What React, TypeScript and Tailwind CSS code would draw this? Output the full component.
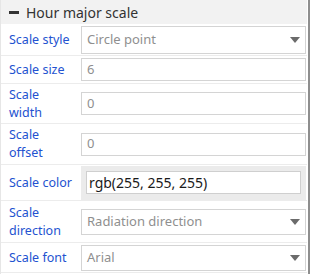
import { ReactNode } from "react";

const font = { fontFamily: '"Noto Sans", "Open Sans", sans-serif' };

function Caret() {
  return (
    <svg width="10" height="6" viewBox="0 0 10 6" className="shrink-0">
      <path d="M0 0 H10 L5 6 Z" fill="#6b6b6b" />
    </svg>
  );
}

function Row({
  label,
  height,
  children,
}: {
  label: ReactNode;
  height: string;
  children: ReactNode;
}) {
  return (
    <div className={`flex items-center border-b border-[#ececec] ${height}`}>
      <div className="w-[80px] shrink-0 pl-2 pr-1 text-[12.5px] leading-[18px] text-[#2352d0]">
        {label}
      </div>
      <div className="flex-1 pr-px">{children}</div>
    </div>
  );
}

function SelectBox({ value, height }: { value: string; height: string }) {
  return (
    <div
      className={`flex items-center justify-between border border-[#d4d4d4] bg-white pl-[5px] pr-[5px] ${height}`}
    >
      <span className="text-[13px] text-[#8f8f8f]">{value}</span>
      <Caret />
    </div>
  );
}

function TextBox({ value, height }: { value: string; height: string }) {
  return (
    <div
      className={`flex items-center border border-[#d4d4d4] bg-white pl-[5px] ${height}`}
    >
      <span className="text-[13px] text-[#8f8f8f]">{value}</span>
    </div>
  );
}

export default function App() {
  return (
    <div className="w-[310px] h-[274px] overflow-hidden bg-white" style={font}>
      <div className="flex h-full">
        <div className="w-[307px] border-l border-[#e6e6e6]">
          <div className="flex h-[24px] items-center gap-[7px] bg-[#f2f2f2] pl-[8px]">
            <span className="block h-[3px] w-[10px] bg-[#333]" />
            <span className="text-[14px] text-[#333]">Hour major scale</span>
          </div>
          <Row label="Scale style" height="h-[32px]">
            <SelectBox value="Circle point" height="h-[28px]" />
          </Row>
          <Row label="Scale size" height="h-[28px]">
            <TextBox value="6" height="h-[23px]" />
          </Row>
          <Row
            label={
              <>
                Scale
                <br />
                width
              </>
            }
            height="h-[40px]"
          >
            <TextBox value="0" height="h-[23px]" />
          </Row>
          <Row
            label={
              <>
                Scale
                <br />
                offset
              </>
            }
            height="h-[41px]"
          >
            <TextBox value="0" height="h-[23px]" />
          </Row>
          <Row label="Scale color" height="h-[36px]">
            <div className="flex h-[34px] items-center bg-[#ebebeb] px-[5px]">
              <div className="flex h-[23px] flex-1 items-center border border-[#cfcfcf] bg-white pl-[2px]">
                <span className="text-[14px] text-[#1a1a1a]">
                  rgb(255, 255, 255)
                </span>
              </div>
            </div>
          </Row>
          <Row
            label={
              <>
                Scale
                <br />
                direction
              </>
            }
            height="h-[42px]"
          >
            <SelectBox value="Radiation direction" height="h-[26px]" />
          </Row>
          <Row label="Scale font" height="h-[30px]">
            <SelectBox value="Arial" height="h-[26px]" />
          </Row>
        </div>
        <div className="w-px bg-white" />
        <div className="w-[2px] bg-[#8e8e8e]" />
      </div>
    </div>
  );
}
